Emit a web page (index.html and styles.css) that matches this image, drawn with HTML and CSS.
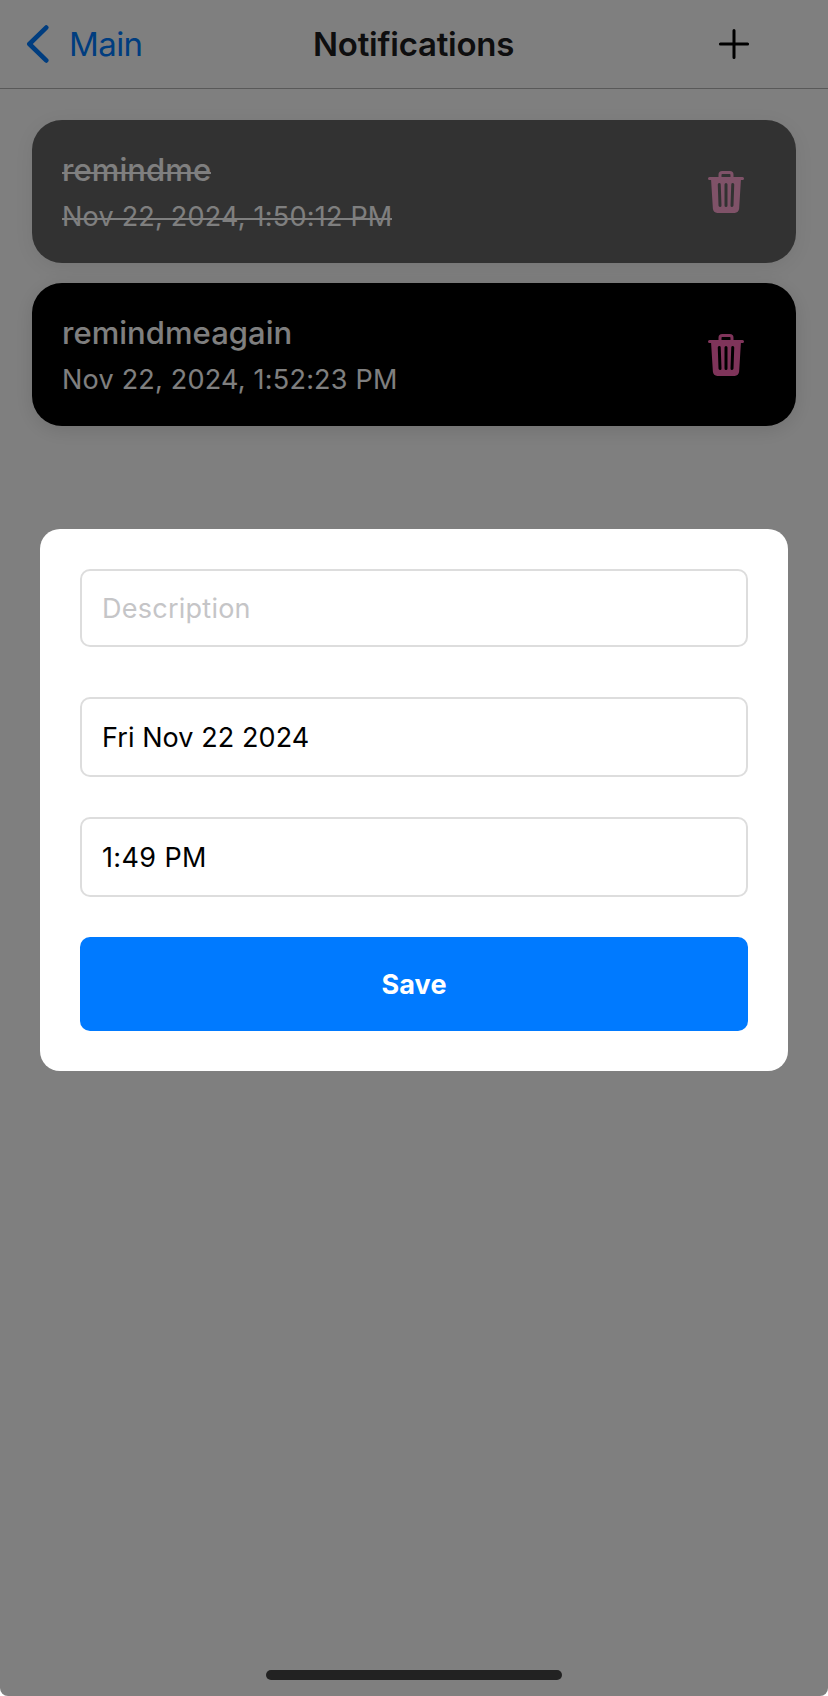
FILE: index.html
```html
<!DOCTYPE html>
<html lang="en">
<head>
<meta charset="utf-8">
<title>Notifications</title>
<link rel="stylesheet" href="styles.css">
</head>
<body>
<svg class="sprite" width="0" height="0" aria-hidden="true">
  <symbol id="trash" viewBox="0 0 512 512"><path fill="currentColor" d="M432 96h-96V72a40 40 0 00-40-40h-80a40 40 0 00-40 40v24H80a16 16 0 000 32h17l19 304.92c1.42 26.85 22 47.08 48 47.08h184c26.13 0 46.3-19.78 48-47l19-305h17a16 16 0 000-32zM192.57 416H192a16 16 0 01-16-15.43l-8-224a16 16 0 1132-1.14l8 224A16 16 0 01192.57 416zM272 400a16 16 0 01-32 0V176a16 16 0 0132 0zm32-304h-96V72a7.91 7.91 0 018-8h80a7.91 7.91 0 018 8zm32 304.57A16 16 0 01320 416h-.58A16 16 0 01304 399.43l8-224a16 16 0 1132 1.14z"/></symbol>
</svg>
<div class="screen">
  <header class="navbar">
    <a class="back">
      <svg width="24" height="40" viewBox="0 0 24 40"><path d="M21.2 3.6 4.4 20l16.8 16.4" fill="none" stroke="currentColor" stroke-width="4.7" stroke-linecap="round" stroke-linejoin="round"/></svg>
      <span class="back-label">Main</span>
    </a>
    <h1 class="title">Notifications</h1>
    <button class="add" aria-label="Add">
      <svg width="32" height="32" viewBox="0 0 32 32"><path d="M16 2.4v27.2M2.4 16h27.2" stroke="#000" stroke-width="3" stroke-linecap="round"/></svg>
    </button>
  </header>
  <main class="list">
    <article class="card past">
      <div class="info">
        <div class="name">remindme</div>
        <div class="when">Nov 22, 2024, 1:50:12 PM</div>
      </div>
      <button class="delete" aria-label="Delete"><svg width="48" height="48"><use href="#trash"/></svg></button>
    </article>
    <article class="card">
      <div class="info">
        <div class="name again">remindmeagain</div>
        <div class="when">Nov 22, 2024, 1:52:23 PM</div>
      </div>
      <button class="delete" aria-label="Delete"><svg width="48" height="48"><use href="#trash"/></svg></button>
    </article>
  </main>
  <div class="home-indicator"></div>
  <div class="overlay">
    <form class="modal">
      <div class="field description">Description</div>
      <div class="field date">Fri Nov 22 2024</div>
      <div class="field time">1:49 PM</div>
      <button class="save" type="button">Save</button>
    </form>
  </div>
</div>
</body>
</html>
```
FILE: styles.css
```css
* { box-sizing: border-box; }

body {
  margin: 0;
  background: #fff;
  font-family: Inter, "Liberation Sans", sans-serif;
}

button {
  margin: 0;
  padding: 0;
  border: 0;
  background: none;
  font-family: inherit;
}

svg { display: block; }

.sprite { position: absolute; }

.screen {
  position: relative;
  display: flex;
  flex-direction: column;
  height: 1696px;
  border-radius: 0 0 8px 8px;
  overflow: hidden;
  background: #fff;
}

.navbar {
  display: grid;
  grid-template-columns: 1fr auto 1fr;
  align-items: center;
  height: 89px;
  padding: 0 78px 0 25px;
  border-bottom: 1px solid #b3b3b3;
}

.back {
  display: flex;
  align-items: center;
  gap: 20px;
  width: 260px;
  color: #007aff;
  font-size: 33px;
  line-height: 40px;
}

.back-label { letter-spacing: -0.58px; }

.title {
  width: 203px;
  margin: 0 26px 0 28px;
  color: #1c1c1e;
  font-size: 33px;
  font-weight: 600;
  line-height: 40px;
  letter-spacing: -0.24px;
  white-space: nowrap;
}

.add { justify-self: end; }

.list {
  display: flex;
  flex-direction: column;
  gap: 20px;
  flex: 1;
  padding: 31px 32px;
}

.card {
  display: flex;
  align-items: center;
  justify-content: space-between;
  height: 143px;
  padding: 30px 46px 30px 30px;
  border-radius: 30px;
  background: #000;
  color: #fff;
  box-shadow: 0 4px 20px rgba(0, 0, 0, 0.12);
}

.past { opacity: 0.6; }

/* Strike line sits at a fixed height in each row of a past reminder */
.past .name,
.past .when {
  background: linear-gradient(#fff, #fff) 0 22px / 100% 2px no-repeat;
}

.past .when { background-position: 0 18px; }

.info {
  display: flex;
  flex-direction: column;
  align-self: flex-start;
  align-items: flex-start;
  gap: 11px;
}

.name {
  font-size: 31px;
  font-weight: 500;
  line-height: 39px;
  letter-spacing: 0.1px;
}

.again { letter-spacing: 0.04px; }

.when {
  font-size: 27px;
  line-height: 34px;
  letter-spacing: 0.22px;
}

.delete { color: #ff69b4; }

.home-indicator {
  align-self: center;
  width: 296px;
  height: 10px;
  margin-bottom: 16px;
  border-radius: 5px;
  background: #444;
}

.overlay {
  position: absolute;
  inset: 0;
  padding: 529px 40px 0;
  background: rgba(0, 0, 0, 0.5);
}

.modal {
  display: flex;
  flex-direction: column;
  gap: 40px;
  padding: 40px;
  border-radius: 20px;
  background: #fff;
}

.field {
  display: flex;
  align-items: center;
  height: 80px;
  padding: 2px 20px 0;
  border: 2px solid #ddd;
  border-radius: 10px;
  color: #000;
  font-size: 27px;
  line-height: 34px;
}

.description {
  height: 78px;
  margin-bottom: 10px;
  color: #c5c5c7;
  letter-spacing: 0.25px;
}

.date { letter-spacing: 0.08px; }

.time { letter-spacing: 0.37px; }

.save {
  height: 94px;
  padding-top: 2px;
  border-radius: 10px;
  background: #007aff;
  color: #fff;
  font-size: 27px;
  font-weight: 700;
  line-height: 34px;
  letter-spacing: 0.13px;
}
```
